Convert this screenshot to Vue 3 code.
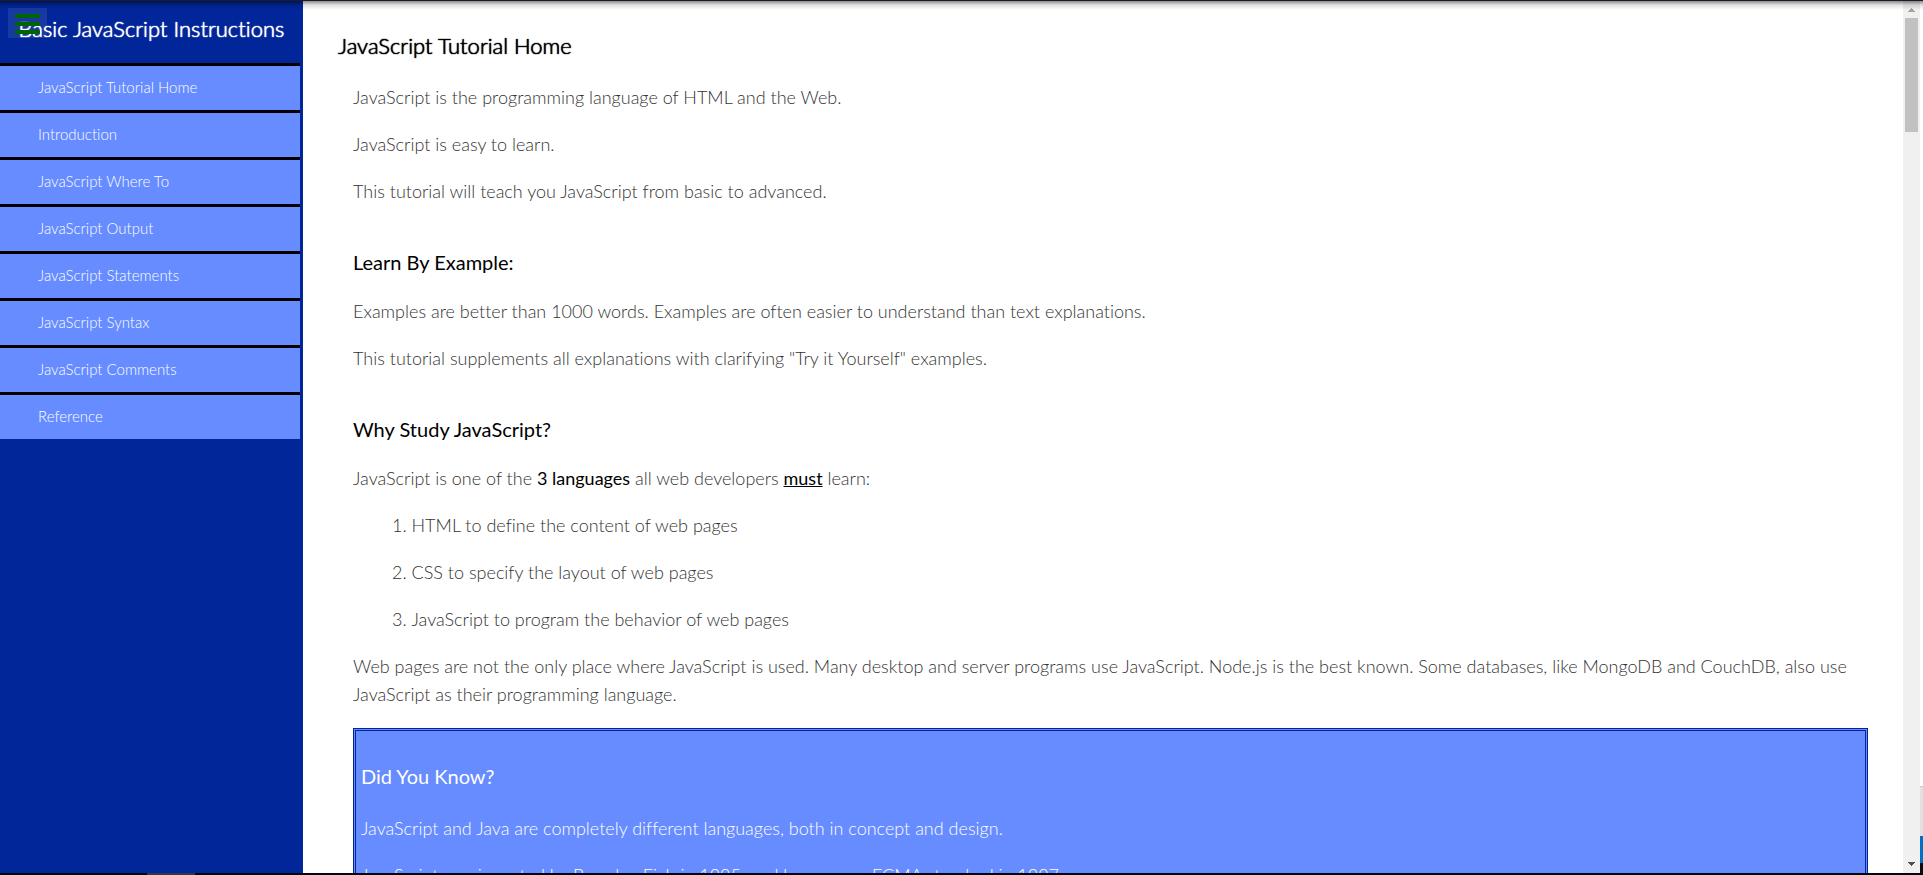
<script setup>
const lessons = [
  'JavaScript Tutorial Home',
  'Introduction',
  'JavaScript Where To',
  'JavaScript Output',
  'JavaScript Statements',
  'JavaScript Syntax',
  'JavaScript Comments',
  'Reference',
]
</script>

<template>
  <div class="window">
    <div class="page">
      <nav class="sidebar" aria-label="Lessons">
        <button class="menu" type="button" aria-label="Toggle menu">
          <span></span><span></span><span></span>
        </button>
        <h1 class="brand">Basic JavaScript Instructions</h1>
        <ul class="links">
          <li v-for="lesson in lessons" :key="lesson"><a href="#">{{ lesson }}</a></li>
        </ul>
      </nav>

      <main class="content">
        <h2>JavaScript Tutorial Home</h2>
        <section>
          <p>JavaScript is the programming language of HTML and the Web.</p>
          <p>JavaScript is easy to learn.</p>
          <p>This tutorial will teach you JavaScript from basic to advanced.</p>
        </section>
        <section>
          <h3>Learn By Example:</h3>
          <p>Examples are better than 1000 words. Examples are often easier to understand than text explanations.</p>
          <p>This tutorial supplements all explanations with clarifying "Try it Yourself" examples.</p>
        </section>
        <section>
          <h3>Why Study JavaScript?</h3>
          <p>JavaScript is one of the <strong>3 languages</strong> all web developers <strong><u>must</u></strong> learn:</p>
          <ol>
            <li>HTML to define the content of web pages</li>
            <li>CSS to specify the layout of web pages</li>
            <li>JavaScript to program the behavior of web pages</li>
          </ol>
          <p>Web pages are not the only place where JavaScript is used. Many desktop and server programs use JavaScript. Node.js is the best known. Some databases, like MongoDB and CouchDB, also use JavaScript as their programming language.</p>
          <aside class="note">
            <h3>Did You Know?</h3>
            <p>JavaScript and Java are completely different languages, both in concept and design.</p>
            <p>JavaScript was invented by Brendan Eich in 1995, and became an ECMA standard in 1997.</p>
          </aside>
        </section>
      </main>

      <div class="scrollbar" aria-hidden="true">
        <svg class="arrow" viewBox="0 0 17 16"><path d="M5 11h7v-1h-1v-1h-1v-1H9V7H8v1H7v1H6v1H5z" fill="#a3a3a3" /></svg>
        <div class="track"><div class="thumb"></div></div>
        <svg class="arrow" viewBox="0 0 17 17"><path d="M5 6h7v1h-1v1h-1v1H9v1H8V9H7V8H6V7H5z" fill="#505050" /></svg>
      </div>
      <div class="edge" aria-hidden="true"><i></i><i></i><i></i><i></i></div>
      <div class="shade"></div>
    </div>
    <div class="taskbar"><span></span></div>
  </div>
</template>

<style>
html, body { margin: 0; background: #fff; }
</style>

<style scoped>
.window {
  display: flex;
  flex-direction: column;
  height: 100vh;
  overflow: hidden;
  border-top: 1px solid #1d1a2b;
  box-sizing: border-box;
  font-family: Lato, "Open Sans", sans-serif;
  font-weight: 300;
  font-variant-ligatures: none;
  color: #333;
}
.page { position: relative; display: flex; flex: 1; min-height: 0; overflow: hidden; }
.shade {
  position: absolute;
  inset: 0 0 auto;
  height: 9px;
  background: linear-gradient(rgba(0, 0, 0, .45), rgba(0, 0, 0, .12) 45%, transparent);
  pointer-events: none;
}

.sidebar { position: relative; flex: none; width: 303px; background: #002699; }
.menu {
  position: absolute;
  left: 8px;
  top: 7px;
  display: flex;
  flex-direction: column;
  gap: 4px;
  width: 39px;
  padding: 6px 7px 4px;
  border: 0;
  background: rgba(255, 255, 255, .09);
  cursor: pointer;
}
.menu span { height: 4px; border-radius: 1px; background: #006400; }
.brand {
  margin: 0;
  padding: 12px 0 18px;
  line-height: 32px;
  font-size: 22px;
  font-weight: 300;
  text-shadow: 0 0 1px #fff, 0 0 1px #fff;
  text-align: center;
  white-space: nowrap;
  color: #fff;
}
.links { margin: 0 3px 0 0; padding: 0; list-style: none; }
.links a {
  display: block;
  padding: 0 38px 2px;
  border-top: 3px solid #000;
  line-height: 42px;
  font-size: 15px;
  color: #fff;
  background: #668cff;
  text-decoration: none;
}

.content { flex: 1; min-width: 0; padding: 29px 35px 0; }
h2, h3 { margin: 0; line-height: 32px; color: #000; }
h2 { margin-bottom: 21px; font-size: 22px; font-weight: 300; text-shadow: 0 0 1px #000, 0 0 1px #000; }
h3 { margin-bottom: 19px; font-size: 20px; font-weight: 400; }
section { padding: 0 0 0 15px; }
p, li { margin: 19px 0; line-height: 28px; font-size: 18px; }
section + section { margin-top: 41px; }
ol { margin: 0; padding-left: 39px; list-style-position: inside; }
.links li { margin: 0; }
strong { font-weight: 400; color: #000; }
.note {
  margin-top: 20px;
  padding: 29px 5px;
  border: 3px double #002699;
  background: #668cff;
  color: #fff;
}
.note h3 { margin-bottom: 22px; color: #fff; }

.scrollbar { display: flex; flex-direction: column; flex: none; width: 17px; background: #f0f0f0; }
.arrow { display: block; flex: none; width: 17px; shape-rendering: crispEdges; }
.track { flex: 1; padding: 1px 2px; }
.thumb { height: 114px; background: #c1c1c1; }
.edge { display: flex; flex-direction: column; flex: none; width: 3px; background: #fff; }
.edge i:nth-child(1) { flex: 1; }
.edge i:nth-child(2) { height: 50px; background: #e1e1e1; border-top: 1px solid #ccc; box-sizing: border-box; }
.edge i:nth-child(3) { height: 27px; background: #0072c6; }
.edge i:nth-child(4) { height: 10px; background: #0a0c12; }
.taskbar { height: 2px; flex: none; background: #05060d; }
.taskbar span { display: block; width: 48px; height: 2px; margin-left: 147px; background: #343845; }
</style>
